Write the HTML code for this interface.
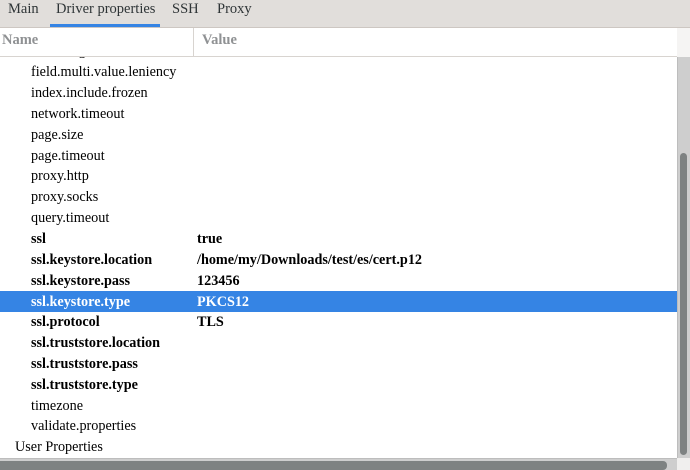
<!DOCTYPE html><html><head><style>
body{margin:0;width:690px;height:470px;overflow:hidden;background:#fff;font-family:"Liberation Serif",serif;font-size:14.2px;color:#000;position:relative}
.tabs{position:absolute;left:0;top:0;width:690px;height:28px;background:#e1dedb;border-bottom:1px solid #cdc7c2;box-sizing:border-box}
.tab{position:absolute;top:0;font-size:14.5px;color:#2e3436;line-height:18px}
.ul{position:absolute;left:50px;top:24px;width:110px;height:3px;background:#3584e4}
.hdr{position:absolute;left:0;top:28px;width:677px;height:29px;border-bottom:1px solid #d8d4d0;box-sizing:border-box;color:#8f9193;font-weight:bold;font-size:14.5px}
.hdr span{position:absolute;top:4px}
.div{position:absolute;left:193px;top:28px;width:1px;height:29px;background:#d8d4d0}
.r{position:absolute;left:0;width:677px;height:21px;line-height:21px;white-space:nowrap}
.r .n{position:absolute;left:31px;top:1px}.r .v{position:absolute;left:197px;top:1px}
.b{font-weight:bold}
.sel{background:#3584e4;color:#fff}
.vs{position:absolute;left:677px;top:57px;width:13px;height:401px;background:#cecece;border-left:1px solid #bdbdbd;box-sizing:border-box}
.vt{position:absolute;left:680px;top:153px;width:7px;height:302px;background:#7e8282;border-radius:4px}
.hs{position:absolute;left:0;top:458px;width:677px;height:12px;background:#cecece;border-top:1px solid #bdbdbd;box-sizing:border-box}
.ht{position:absolute;left:0;top:461px;width:667px;height:9px;background:#7e8282;border-radius:0 4px 4px 0}
.corner{position:absolute;left:677px;top:458px;width:13px;height:12px;background:#f0efee}
.hcorner{position:absolute;left:677px;top:28px;width:13px;height:29px;background:#f5f4f3}
</style></head><body>
<div class="tabs"><span class="tab" style="left:8px">Main</span><span class="tab" style="left:56px">Driver properties</span><span class="tab" style="left:172px">SSH</span><span class="tab" style="left:217px">Proxy</span><div class="ul"></div></div>
<div class="r" style="top:40px"><span class="n">field.long.name</span></div>
<div class="hdr" style="background:#fff"><span style="left:2px">Name</span><span style="left:202px">Value</span></div>
<div class="div"></div><div class="hcorner"></div>
<div class="r" style="top:61px"><span class="n">field.multi.value.leniency</span></div>
<div class="r" style="top:82px"><span class="n">index.include.frozen</span></div>
<div class="r" style="top:103px"><span class="n">network.timeout</span></div>
<div class="r" style="top:124px"><span class="n">page.size</span></div>
<div class="r" style="top:145px"><span class="n">page.timeout</span></div>
<div class="r" style="top:165px"><span class="n">proxy.http</span></div>
<div class="r" style="top:186px"><span class="n">proxy.socks</span></div>
<div class="r" style="top:207px"><span class="n">query.timeout</span></div>
<div class="r b" style="top:228px"><span class="n">ssl</span><span class="v">true</span></div>
<div class="r b" style="top:249px"><span class="n">ssl.keystore.location</span><span class="v">/home/my/Downloads/test/es/cert.p12</span></div>
<div class="r b" style="top:270px"><span class="n">ssl.keystore.pass</span><span class="v">123456</span></div>
<div class="r b sel" style="top:291px"><span class="n">ssl.keystore.type</span><span class="v">PKCS12</span></div>
<div class="r b" style="top:311px"><span class="n">ssl.protocol</span><span class="v">TLS</span></div>
<div class="r b" style="top:332px"><span class="n">ssl.truststore.location</span></div>
<div class="r b" style="top:353px"><span class="n">ssl.truststore.pass</span></div>
<div class="r b" style="top:374px"><span class="n">ssl.truststore.type</span></div>
<div class="r" style="top:395px"><span class="n">timezone</span></div>
<div class="r" style="top:415px"><span class="n">validate.properties</span></div>
<div class="r" style="top:436px"><span class="n" style="left:15px">User Properties</span></div>
<div class="vs"></div><div class="vt"></div>
<div class="hs"></div><div class="ht"></div><div class="corner"></div>
</body></html>
